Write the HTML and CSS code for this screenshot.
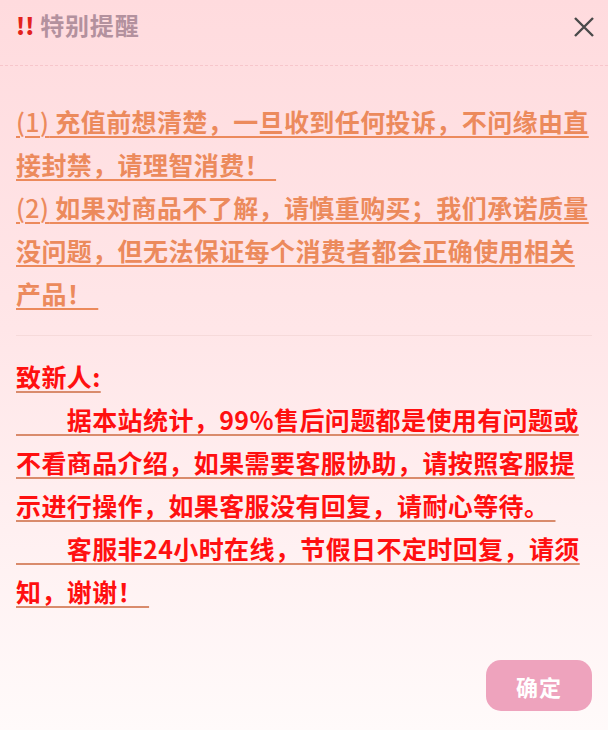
FILE: index.html
```html
<!DOCTYPE html>
<html lang="zh-CN">
<head>
<meta charset="utf-8">
<link rel="stylesheet" href="styles.css">
</head>
<body>
<div class="dialog">
  <div class="header">
    <div class="title"><span class="bang">!!</span>特别提醒</div>
    <svg class="close" width="22" height="22" viewBox="0 0 22 22"><path d="M2 2 L20 20 M20 2 L2 20" stroke="#4a4a4a" stroke-width="2.4" fill="none"/></svg>
  </div>
  <div class="content">
    <p class="notice"><span class="num">(1)</span> 充值前想清楚，一旦收到任何投诉，不问缘由直接封禁，请理智消费！&nbsp;<br><span class="num">(2)</span> 如果对商品不了解，请慎重购买；我们承诺质量没问题，但无法保证每个消费者都会正确使用相关产品！&nbsp;</p>
    <hr class="sep">
    <p class="notice red"><span class="redtext">致新人:<br>　　据本站统计，99%售后问题都是使用有问题或不看商品介绍，如果需要客服协助，请按照客服提示进行操作，如果客服没有回复，请耐心等待。&nbsp;<br>　　客服非24小时在线，节假日不定时回复，请须知，谢谢！&nbsp;</span></p>
  </div>
  <div class="footer">
    <button class="ok">确定</button>
  </div>
</div>
</body>
</html>
```
FILE: styles.css
```css
html, body {
  margin: 0;
  padding: 0;
}
body {
  width: 608px;
  height: 730px;
  background: linear-gradient(180deg, #ffdbde 0%, #ffe6e8 45%, #fffafa 100%);
  font-family: "Noto Sans CJK SC", "Noto Sans", sans-serif;
  overflow: hidden;
}
.dialog {
  height: 730px;
  display: flex;
  flex-direction: column;
}
.header {
  height: 66px;
  box-sizing: border-box;
  padding: 8px 13px 0 16px;
  display: flex;
  justify-content: space-between;
  align-items: flex-start;
  border-bottom: 1px dashed #f7c6cb;
}
.title {
  font-size: 24px;
  font-weight: 700;
  color: #b3919e;
  line-height: 34px;
  letter-spacing: 0.8px;
}
.bang {
  color: #e3221c;
  font-weight: 900;
  font-size: 23px;
  margin-right: 6px;
  letter-spacing: 0;
}
.close {
  margin-top: 8px;
}
.content {
  padding: 34px 12px 0 16px;
}
.notice {
  margin: 0;
  font-size: 25px;
  letter-spacing: 0.4px;
  line-height: 43px;
  font-weight: 700;
  color: #ec8a5c;
  text-decoration: underline;
  text-decoration-thickness: 2px;
  text-underline-offset: 4px;
  text-decoration-color: #ec8a5c;
}
.num {
  font-weight: 500;
}
.notice.red {
  text-decoration-color: #d98b6c;
}
.redtext {
  color: #ff1010;
}
.sep {
  border: none;
  border-top: 1px solid #f6dada;
  margin: 20px 4px 19px 0;
}
.footer {
  margin-top: auto;
  padding: 0 16px 19px 0;
  display: flex;
  justify-content: flex-end;
}
.ok {
  width: 106px;
  height: 51px;
  border: none;
  border-radius: 15px;
  background: #eea3bd;
  color: #ffffff;
  font-family: "Noto Sans CJK SC", sans-serif;
  font-size: 22px;
  font-weight: 700;
  letter-spacing: 1px;
}
```
